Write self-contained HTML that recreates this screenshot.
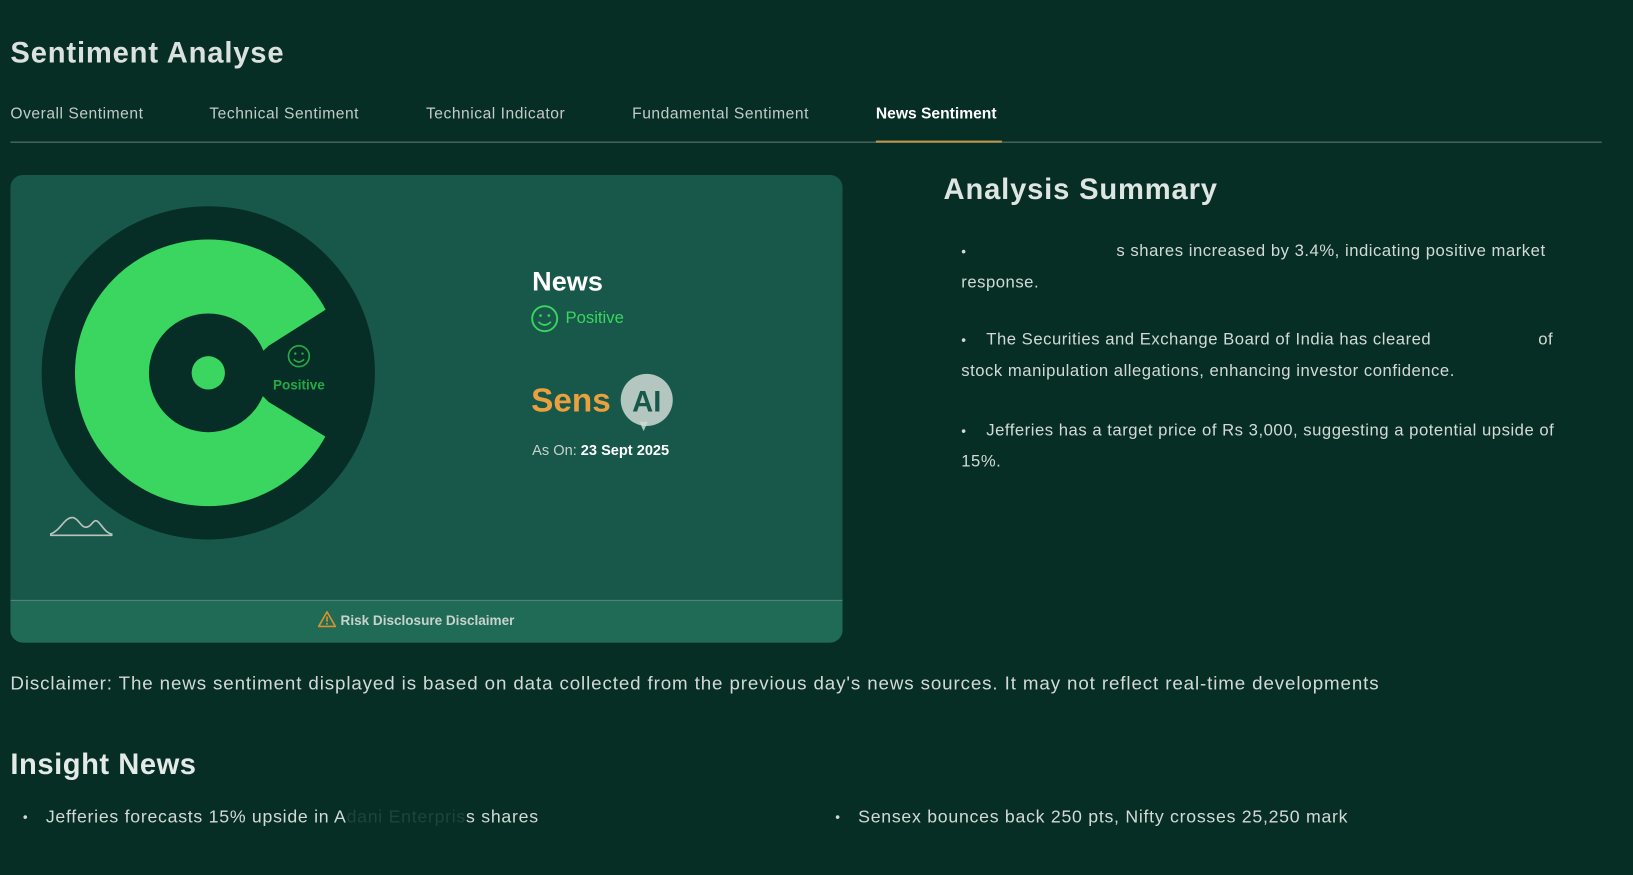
<!DOCTYPE html>
<html><head><meta charset="utf-8"><style>
html,body{margin:0;padding:0;background:#062e25;width:1633px;height:875px;overflow:hidden;font-family:"Liberation Sans",sans-serif;}
#w{position:absolute;left:0;top:0;width:1568px;height:840px;transform:scale(1.04145);transform-origin:0 0;}
.a{position:absolute;white-space:nowrap;}
.t{font-size:15px;letter-spacing:0.5px;color:#c3cbc7;top:101px;}
.s{font-size:16px;letter-spacing:0.5px;color:#d3dad6;}
.dot{font-size:13px;color:#d3dad6;}
</style></head><body><div id="w">
<div class="a" style="left:10px;top:35px;font-size:28px;letter-spacing:0.8px;font-weight:bold;color:#dbe1de;">Sentiment Analyse</div>
<div class="a t" style="left:10px">Overall Sentiment</div>
<div class="a t" style="left:201px">Technical Sentiment</div>
<div class="a t" style="left:409px">Technical Indicator</div>
<div class="a t" style="left:607px">Fundamental Sentiment</div>
<div class="a t" style="left:841px;color:#fff;font-weight:bold;letter-spacing:0">News Sentiment</div>
<div class="a" style="left:10px;top:136px;width:1528px;height:1px;background:#5f7a70"></div>
<div class="a" style="left:841px;top:135px;width:121px;height:2px;background:#c0954f"></div>

<div class="a" style="left:10px;top:168px;width:799px;height:449px;border-radius:12px;background:#17584a;overflow:hidden">
 <div class="a" style="left:0;top:408px;width:799px;height:41px;background:#1f6b56;border-top:1.5px solid #5c8276"></div>
 <div class="a" style="left:295px;top:418px;font-size:13px;font-weight:bold;color:#c9d3ce">
  <svg width="18" height="17" viewBox="0 0 18 17" style="vertical-align:-3px;margin-right:4px"><path d="M9 1.5 L17 15.5 H1 Z" fill="none" stroke="#d8912f" stroke-width="1.6" stroke-linejoin="round"/><path d="M9 6v5" stroke="#d8912f" stroke-width="1.6"/><circle cx="9" cy="13" r="0.9" fill="#d8912f"/></svg>Risk Disclosure Disclaimer</div>
</div>

<svg class="a" style="left:0;top:0" width="820" height="620">
 <defs><clipPath id="cp"><circle cx="200" cy="358" r="129"/></clipPath></defs>
 <circle cx="200" cy="358" r="160" fill="#062e26"/>
 <circle cx="200" cy="358" r="128" fill="#3ad65f"/>
 <polygon clip-path="url(#cp)" points="230,358 258,332 340,280 340,436 258,386" fill="#062e26"/>
 <circle cx="200" cy="358" r="57" fill="#062e26"/>
 <circle cx="200" cy="358" r="16" fill="#3ad65f"/>
 <circle cx="287" cy="342" r="10" fill="none" stroke="#27a847" stroke-width="1.6"/>
 <circle cx="283.5" cy="339.5" r="1.2" fill="#27a847"/><circle cx="290.5" cy="339.5" r="1.2" fill="#27a847"/>
 <path d="M282 345 Q287 350 292 345" fill="none" stroke="#27a847" stroke-width="1.5"/>
 <text x="287" y="374" text-anchor="middle" font-family="Liberation Sans" font-weight="bold" font-size="13" fill="#27a847">Positive</text>
 <path d="M48 513 C58 510 62 496 70 497 C76 498 78 508 84 506 C88 505 89 500 92 500 C96 500 100 512 108 513" fill="none" stroke="#b9c2be" stroke-width="1.6"/>
 <path d="M48 514 H108" stroke="#b9c2be" stroke-width="1.6"/>
 <circle cx="523" cy="306" r="12" fill="none" stroke="#3ad65f" stroke-width="1.8"/>
 <circle cx="519" cy="303" r="1.3" fill="#3ad65f"/><circle cx="527" cy="303" r="1.3" fill="#3ad65f"/>
 <path d="M517 309 Q523 315 529 309" fill="none" stroke="#3ad65f" stroke-width="1.6"/>
 <circle cx="621" cy="384" r="25" fill="#cfd9d4" opacity="0.85"/>
 <path d="M614 405 L618 414 L622 405Z" fill="#cfd9d4" opacity="0.85"/>
 <text x="621" y="395" text-anchor="middle" font-family="Liberation Sans" font-weight="bold" font-size="28" fill="#17584a">AI</text>
</svg>
<div class="a" style="left:511px;top:255px;font-size:26px;font-weight:bold;color:#fff">News</div>
<div class="a" style="left:543px;top:297px;font-size:16px;color:#3ad65f">Positive</div>
<div class="a" style="left:510px;top:366px;font-size:32px;font-weight:bold;color:#eba040">Sens</div>
<div class="a" style="left:511px;top:424px;font-size:14px;color:#c8d2cd">As On: <b style="color:#fff">23 Sept 2025</b></div>

<div class="a" style="left:906px;top:166px;font-size:28px;letter-spacing:0.8px;font-weight:bold;color:#dfe5e2">Analysis Summary</div>
<div class="a dot" style="left:923px;top:234px">•</div>
<div class="a s" style="left:1072px;top:233px">s shares increased by 3.4%, indicating positive market</div>
<div class="a s" style="left:923px;top:263px">response.</div>
<div class="a dot" style="left:923px;top:319px">•</div>
<div class="a s" style="left:947px;top:318px">The Securities and Exchange Board of India has cleared</div>
<div class="a s" style="left:1477px;top:318px">of</div>
<div class="a s" style="left:923px;top:348px">stock manipulation allegations, enhancing investor confidence.</div>
<div class="a dot" style="left:923px;top:406px">•</div>
<div class="a s" style="left:947px;top:405px">Jefferies has a target price of Rs 3,000, suggesting a potential upside of</div>
<div class="a s" style="left:923px;top:435px">15%.</div>

<div class="a" style="left:10px;top:646px;font-size:18px;letter-spacing:0.85px;color:#d3dad6">Disclaimer: The news sentiment displayed is based on data collected from the previous day's news sources. It may not reflect real-time developments</div>
<div class="a" style="left:10px;top:718px;font-size:28px;letter-spacing:0.5px;font-weight:bold;color:#e4eae7">Insight News</div>
<div class="a dot" style="left:22px;top:777px">•</div>
<div class="a" style="left:44px;top:775px;font-size:17px;letter-spacing:0.7px;color:#d3dad6">Jefferies forecasts 15% upside in A<span style="opacity:.12">dani Enterpris</span>s shares</div>
<div class="a dot" style="left:802px;top:777px">•</div>
<div class="a" style="left:824px;top:775px;font-size:17px;letter-spacing:0.7px;color:#d3dad6">Sensex bounces back 250 pts, Nifty crosses 25,250 mark</div>
</div></body></html>
